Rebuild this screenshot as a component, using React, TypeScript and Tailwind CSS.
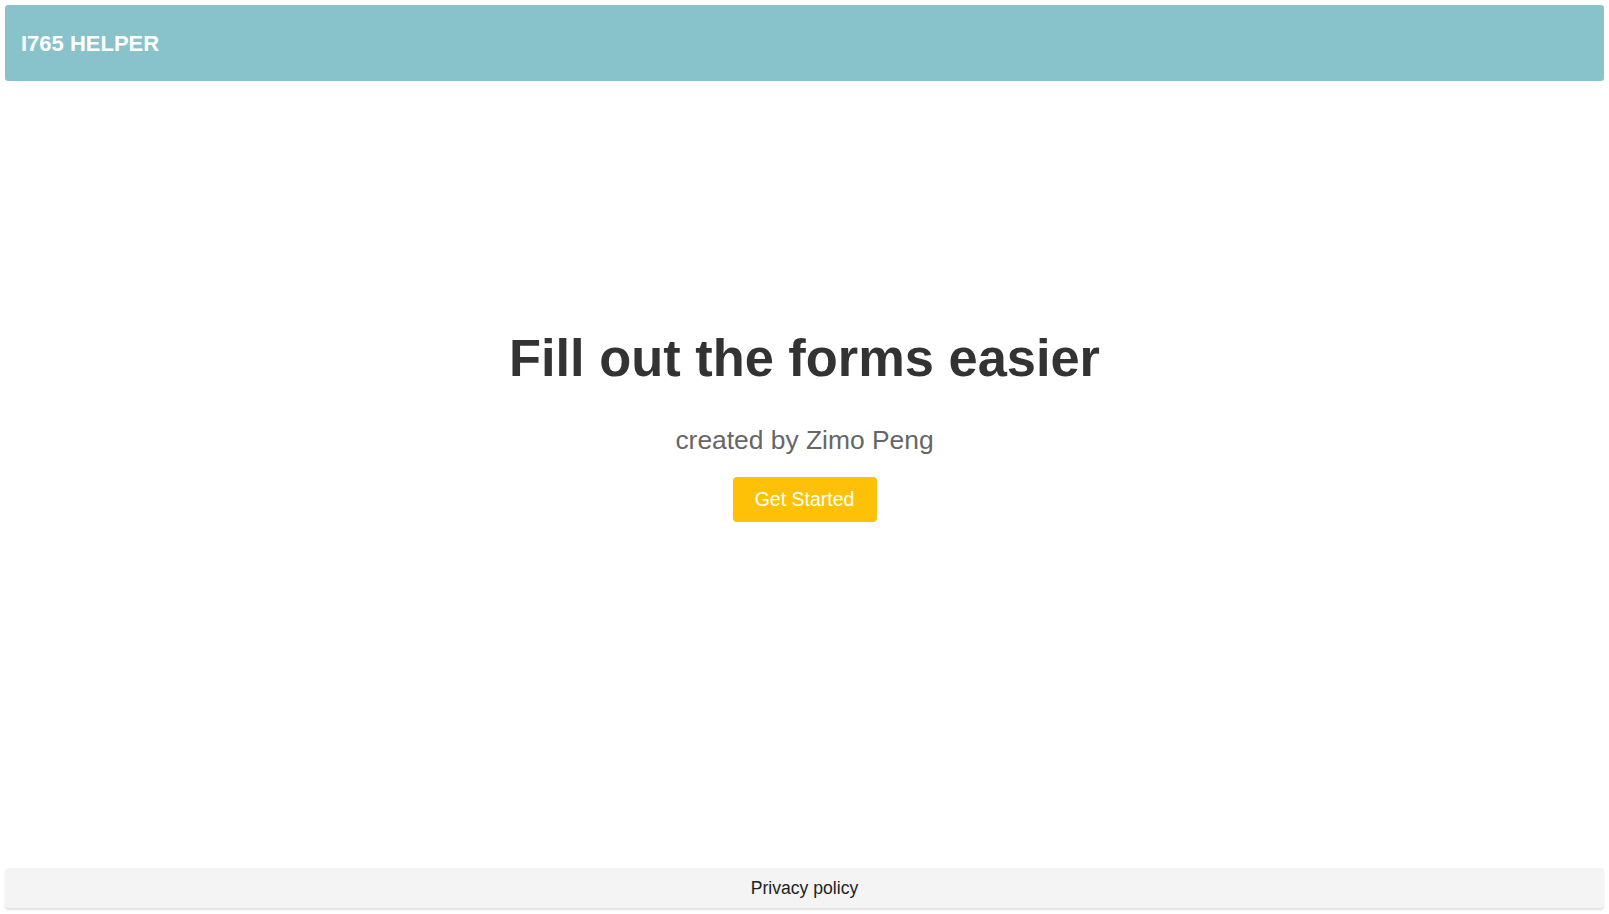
export default function App() {
  return (
    <div
      className="flex min-h-screen flex-col bg-white px-[5px] pt-[5px] pb-[6px]"
      style={{ fontFamily: '"Liberation Sans", Arial, sans-serif' }}
    >
      <header className="flex h-[76px] items-center rounded-[3px] bg-[#88c3cb] pl-[16px]">
        <span className="text-[22px] font-bold text-white">I765 HELPER</span>
      </header>

      <main className="flex flex-1 flex-col items-center pt-[246px]">
        <h1 className="text-[52.4px] font-bold leading-[62px] text-[#333333]">Fill out the forms easier</h1>
        <p className="mt-[36px] text-[26.4px] leading-[30px] text-[#666666]">created by Zimo Peng</p>
        <button className="mt-[22px] flex h-[45px] w-[144px] items-center justify-center rounded-[4px] bg-[#ffc107] text-[19.5px] text-white">
          Get Started
        </button>
      </main>

      <footer className="flex h-[40px] items-center justify-center rounded-[4px] bg-[#f4f4f4] shadow-[0_2px_2px_rgba(0,0,0,0.12)]">
        <span className="text-[17.6px] text-[#222222]">Privacy policy</span>
      </footer>
    </div>
  );
}
